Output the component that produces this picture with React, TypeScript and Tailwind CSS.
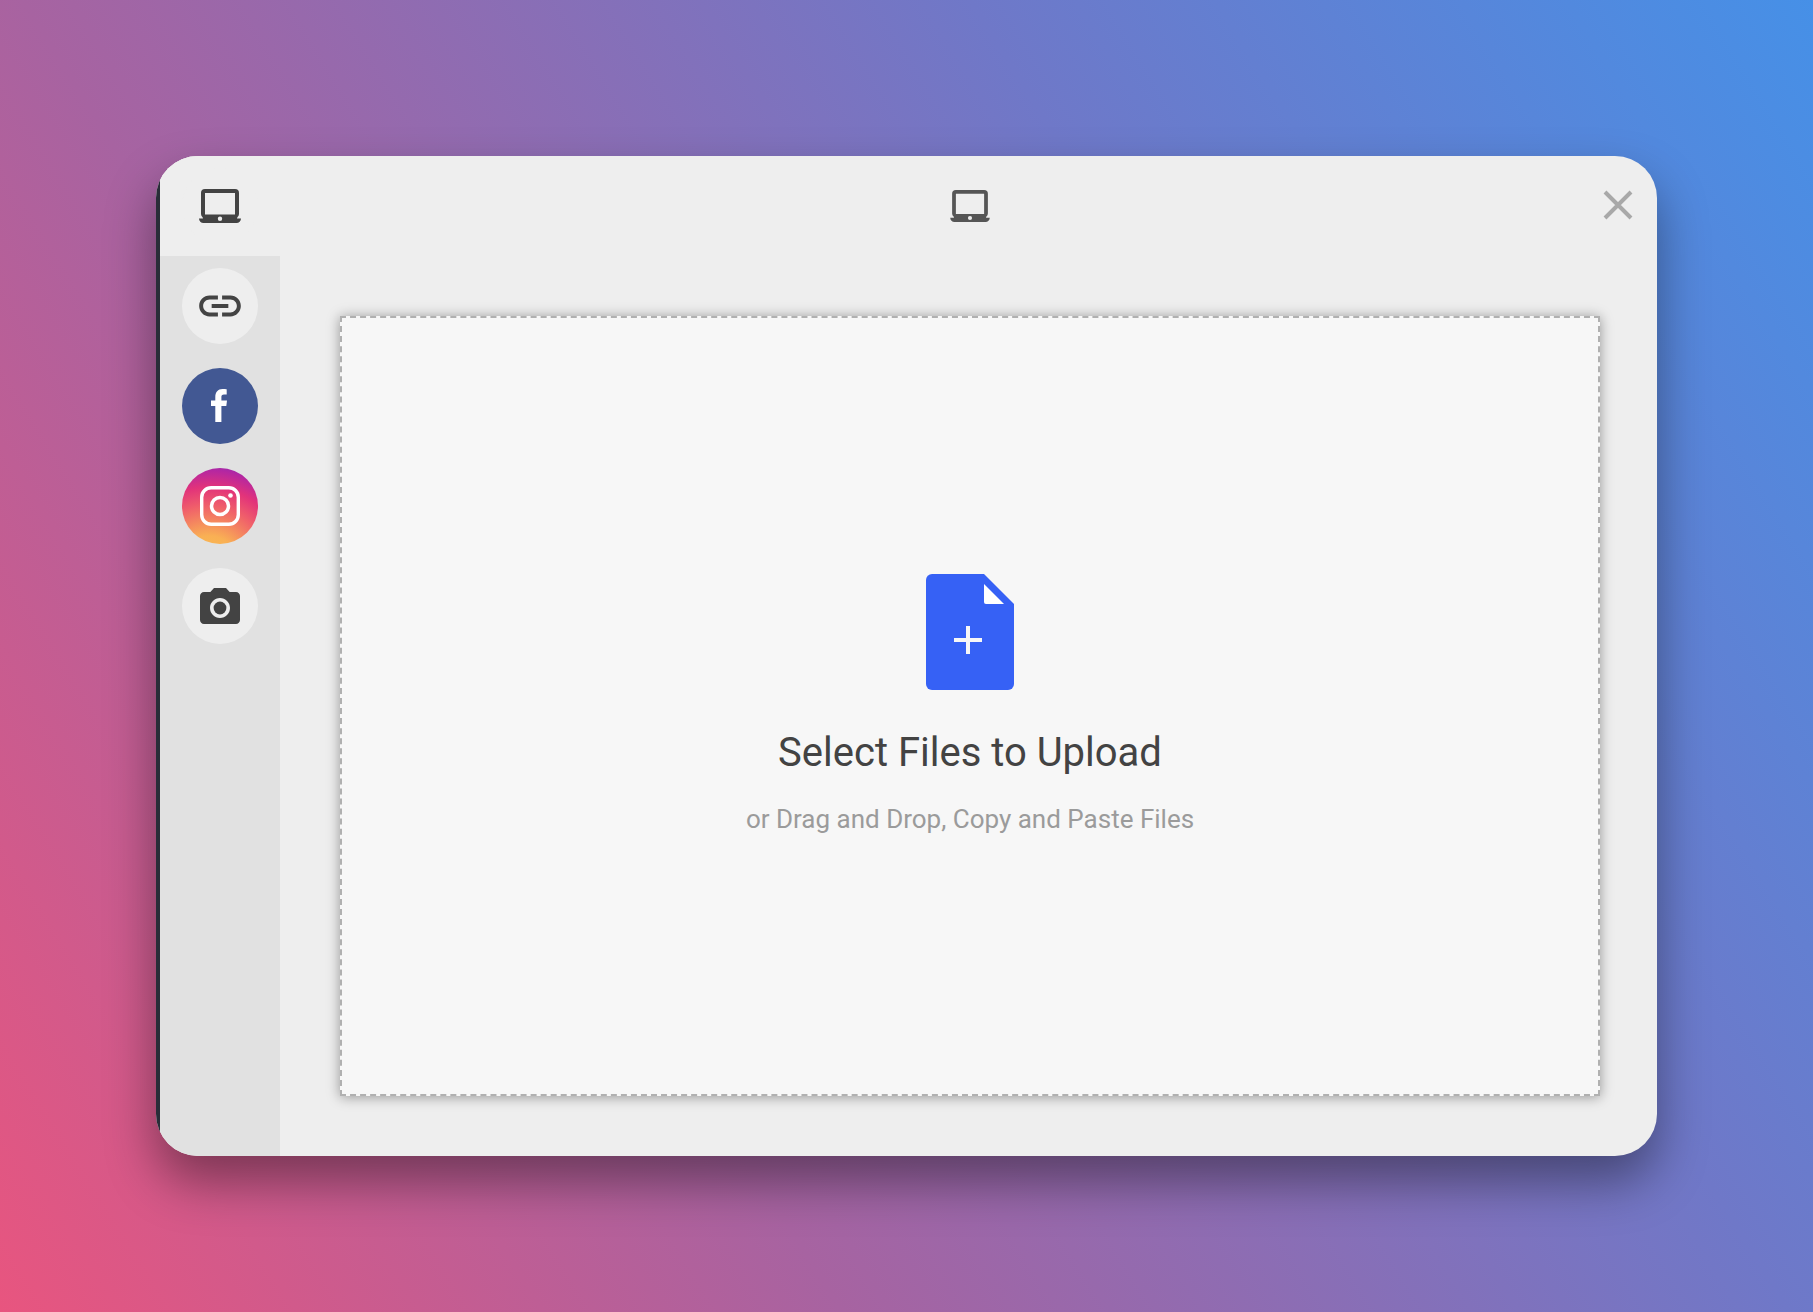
import React from "react"

interface Source {
  id: string
  label: string
  className: string
  icon: React.ReactNode
}

const LaptopIcon = ({ className }: { className: string }) => (
  <svg viewBox="0 0 42 34" className={className} fill="currentColor" aria-hidden="true">
    <path
      fillRule="evenodd"
      d="M6 0h30a4 4 0 0 1 4 4v21a4 4 0 0 1-1.6 3.2L38 29.500h4c0 2.500-2 4.500-4.500 4.500h-33C2 34 0 32 0 29.500h4L3.600 28.200A4 4 0 0 1 2 25V4a4 4 0 0 1 4-4zM6 4v21.500h30V4zM21 27.500a2.200 2.200 0 1 0 0 4.400 2.200 2.200 0 0 0 0-4.400z"
    />
  </svg>
)

const LinkIcon = () => (
  <svg viewBox="0 0 24 24" className="size-[50px]" fill="currentColor" aria-hidden="true">
    <path d="M3.9 12c0-1.71 1.39-3.1 3.1-3.1h4V7H7c-2.76 0-5 2.24-5 5s2.24 5 5 5h4v-1.9H7c-1.71 0-3.1-1.39-3.1-3.1zM8 13h8v-2H8v2zm9-6h-4v1.9h4c1.71 0 3.1 1.39 3.1 3.1s-1.39 3.1-3.1 3.1h-4V17h4c2.76 0 5-2.24 5-5s-2.24-5-5-5z" />
  </svg>
)

const FacebookIcon = () => (
  <svg viewBox="0 0 18 34" className="h-[34px] w-[18px]" fill="currentColor" aria-hidden="true">
    <path d="M4.300 33V17H0v-5.500h4.300V8C4.300 3 7 0 11.500 0c1.800 0 3.500.1 4.200.2v5.300h-2.700c-2 0-2.600.9-2.600 2.500v3.500H16L15.300 17h-4.900v16z" />
  </svg>
)

const InstagramIcon = () => (
  <svg viewBox="0 0 40 40" className="size-10" fill="none" stroke="currentColor" aria-hidden="true">
    <rect x="1.700" y="1.700" width="36.600" height="36.600" rx="9.500" strokeWidth="3.400" />
    <circle cx="20" cy="20" r="8.500" strokeWidth="3.500" />
    <circle cx="30.500" cy="9.500" r="2.300" fill="currentColor" stroke="none" />
  </svg>
)

const CameraIcon = () => (
  <svg viewBox="2 2 20 18" className="h-9 w-10" fill="currentColor" aria-hidden="true">
    <circle cx="12" cy="12" r="3.200" />
    <path d="M9 2L7.170 4H4c-1.100 0-2 .9-2 2v12c0 1.100.9 2 2 2h16c1.100 0 2-.9 2-2V6c0-1.100-.9-2-2-2h-3.170L15 2H9zm3 15c-2.760 0-5-2.240-5-5s2.240-5 5-5 5 2.240 5 5-2.240 5-5 5z" />
  </svg>
)

const FileIcon = () => (
  <svg viewBox="0 0 88 116" className="h-[116px] w-[88px]" aria-hidden="true">
    <path d="M6 0h52l30 30v80a6 6 0 0 1-6 6H6a6 6 0 0 1-6-6V6a6 6 0 0 1 6-6z" fill="#3661f5" />
    <path d="M58 10v18a2 2 0 0 0 2 2h18z" fill="#fff" />
    <path d="M42 52v28M28 66h28" stroke="#f7f7f7" strokeWidth="4" />
  </svg>
)

const sources: Source[] = [
  { id: "local", label: "My Device", className: "bg-[#eee]", icon: <LaptopIcon className="h-[34px] w-[42px]" /> },
  { id: "url", label: "Link (URL)", className: "bg-[#eee]", icon: <LinkIcon /> },
  { id: "facebook", label: "Facebook", className: "bg-[#425893] text-white", icon: <FacebookIcon /> },
  {
    id: "instagram",
    label: "Instagram",
    className:
      "bg-[radial-gradient(circle_at_35%_130%,#fbc04f_0%,#f9b054_28%,#f0606a_55%,#e2337a_72%,#b627a0_87%,#8a2bb8_96%)] text-white",
    icon: <InstagramIcon />,
  },
  { id: "camera", label: "Take Photo", className: "bg-[#eee]", icon: <CameraIcon /> },
]

const Sidebar = ({ selected }: { selected: string }) => (
  <nav aria-label="Sources" className="w-[120px] shrink-0 bg-[#e1e1e1]">
    {sources.map((source) => (
      <div
        key={source.id}
        className={`flex h-[100px] items-center justify-center ${source.id === selected ? "bg-[#eee]" : ""}`}
      >
        <button
          type="button"
          aria-label={source.label}
          className={`flex size-[76px] items-center justify-center rounded-full ${source.className}`}
        >
          {source.icon}
        </button>
      </div>
    ))}
  </nav>
)

const App: React.FC = () => {
  return (
    <div className="flex min-h-screen bg-[linear-gradient(58deg,#e8557f_0%,#a763a1_32%,#6f78c8_68%,#4690e7_100%)] p-[156px] font-['Roboto',sans-serif] text-[#434343]">
      <main className="flex min-w-0 flex-1 overflow-hidden rounded-[42px] bg-[#eee] shadow-[0_26px_50px_rgba(0,0,0,0.4)]">
        {/* Window edge */}
        <div className="w-1 shrink-0 bg-[#292d38]" />

        <Sidebar selected="local" />

        <section className="flex min-w-0 flex-1 flex-col">
          {/* Header */}
          <header className="grid h-[100px] grid-cols-[60px_1fr_57px] items-center">
            <LaptopIcon className="col-start-2 h-8 w-10 justify-self-center text-[#555]" />
            <button type="button" aria-label="Close" className="justify-self-start pb-0.5 pl-[3px] text-[#a8a8a8]">
              <svg viewBox="0 0 30 30" className="size-[30px]" stroke="currentColor" strokeWidth="4" aria-hidden="true">
                <path d="M2 2l26 26M28 2L2 28" />
              </svg>
            </button>
          </header>

          {/* Drop area */}
          <button
            type="button"
            className="mt-[60px] mr-[57px] mb-[60px] ml-[60px] flex flex-1 flex-col items-center justify-center border-2 border-dashed border-[#b0b0b0] bg-[#f7f7f7] pb-1 shadow-[0_1px_12px_rgba(0,0,0,0.38)]"
          >
            <FileIcon />
            <span className="mt-[39px] text-[40px] leading-[48px]">Select Files to Upload</span>
            <span className="mt-[26px] text-[26px] leading-8 text-[#9b9b9b]">or Drag and Drop, Copy and Paste Files</span>
          </button>
        </section>
      </main>
    </div>
  )
}

export default App
